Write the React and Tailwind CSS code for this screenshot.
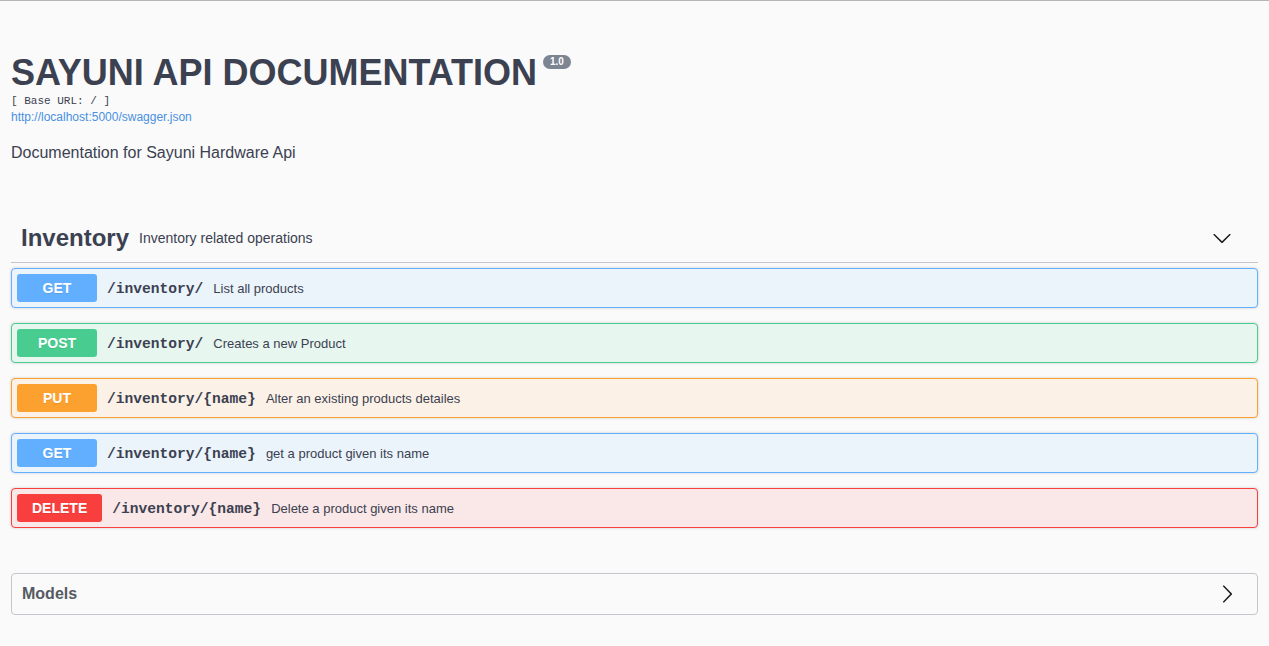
import React from 'react';

const ops = [
  { method: 'GET', path: '/inventory/', summary: 'List all products', tone: 'get' },
  { method: 'POST', path: '/inventory/', summary: 'Creates a new Product', tone: 'post' },
  { method: 'PUT', path: '/inventory/{name}', summary: 'Alter an existing products detailes', tone: 'put' },
  { method: 'GET', path: '/inventory/{name}', summary: 'get a product given its name', tone: 'get' },
  { method: 'DELETE', path: '/inventory/{name}', summary: 'Delete a product given its name', tone: 'delete' },
];

const tones = {
  get: { block: 'border-[#61affe] bg-[#ebf3fb]', badge: 'bg-[#61affe]' },
  post: { block: 'border-[#49cc90] bg-[#e8f6f0]', badge: 'bg-[#49cc90]' },
  put: { block: 'border-[#fca130] bg-[#fbf1e6]', badge: 'bg-[#fca130]' },
  delete: { block: 'border-[#f93e3e] bg-[#fae7e7]', badge: 'bg-[#f93e3e]' },
};

function ChevronDown() {
  return (
    <svg width="20" height="20" viewBox="0 0 20 20" className="fill-[#1a1a1a]">
      <path d="M17.418 6.109c.272-.268.709-.268.979 0s.271.701 0 .969l-7.908 7.83c-.27.268-.707.268-.979 0l-7.908-7.83c-.27-.268-.27-.701 0-.969.271-.268.709-.268.979 0L10 13.25l7.418-7.141z" />
    </svg>
  );
}

function ChevronRight() {
  return (
    <svg width="20" height="20" viewBox="0 0 20 20" className="fill-[#1a1a1a]">
      <path d="M13.25 10L6.109 2.58c-.268-.27-.268-.707 0-.979.268-.27.701-.27.969 0l7.83 7.908c.268.271.268.709 0 .979l-7.83 7.908c-.268.271-.701.27-.969 0-.268-.269-.268-.707 0-.979L13.25 10z" />
    </svg>
  );
}

function OpBlock({ op }) {
  const t = tones[op.tone];
  return (
    <div className={`flex items-center h-[40px] p-[5px] border rounded-[4px] mb-[15px] shadow-[0_0_3px_rgba(0,0,0,0.19)] ${t.block}`}>
      <div className={`min-w-[80px] px-[15px] py-[6px] rounded-[3px] text-center text-white text-[14px] leading-[16px] font-bold [text-shadow:0_1px_0_rgba(0,0,0,0.1)] ${t.badge}`}>
        {op.method}
      </div>
      <span className="mt-[4px] px-[10px] font-['Liberation_Mono',monospace] font-bold text-[14.6px] text-[#3b4151]">
        {op.path}
      </span>
      <span className="mt-[1px] text-[13px] text-[#3b4151]">{op.summary}</span>
    </div>
  );
}

export default function App() {
  return (
    <div className="min-h-screen bg-[#fafafa] font-['Liberation_Sans',Arial,sans-serif] text-[#3b4151]">
      <div className="h-px bg-[#b5b5b5]" />
      <div className="px-[11px] pb-[30px]">
        {/* INFO */}
        <div className="mt-[54px] flex items-start">
          <h2 className="text-[36px] leading-[36px] font-bold text-[#3b4151]">SAYUNI API DOCUMENTATION</h2>
          <span className="ml-[6px] h-[14px] px-[7px] rounded-full bg-[#7d8492] text-white text-[10px] leading-[14px] font-bold">1.0</span>
        </div>
        <div className="mt-[3px] font-['Liberation_Mono',monospace] text-[11px] leading-[14px] text-[#3b4151]">[ Base URL: / ]</div>
        <div className="mt-[2px] text-[12px] leading-[14px] text-[#4990e2]">http://localhost:5000/swagger.json</div>
        <p className="mt-[19px] text-[16px] leading-[20px] text-[#3b4151]">Documentation for Sayuni Hardware Api</p>

        {/* TAG */}
        <div className="mt-[51px] flex items-center h-[49px] pl-[10px] pr-[26px] border-b border-[#c4c6cb] mb-[5px]">
          <span className="text-[24px] leading-[24px] font-bold">Inventory</span>
          <span className="ml-[10px] text-[14px]">Inventory related operations</span>
          <span className="ml-auto flex"><ChevronDown /></span>
        </div>

        {ops.map((op, i) => <OpBlock key={i} op={op} />)}

        {/* MODELS */}
        <div className="mt-[45px] flex items-center h-[42px] border border-[#c4c6cb] rounded-[4px] pl-[10px] pr-[20px]">
          <span className="text-[16px] leading-[20px] font-bold text-[#555a64]">Models</span>
          <span className="ml-auto flex"><ChevronRight /></span>
        </div>
      </div>
    </div>
  );
}
